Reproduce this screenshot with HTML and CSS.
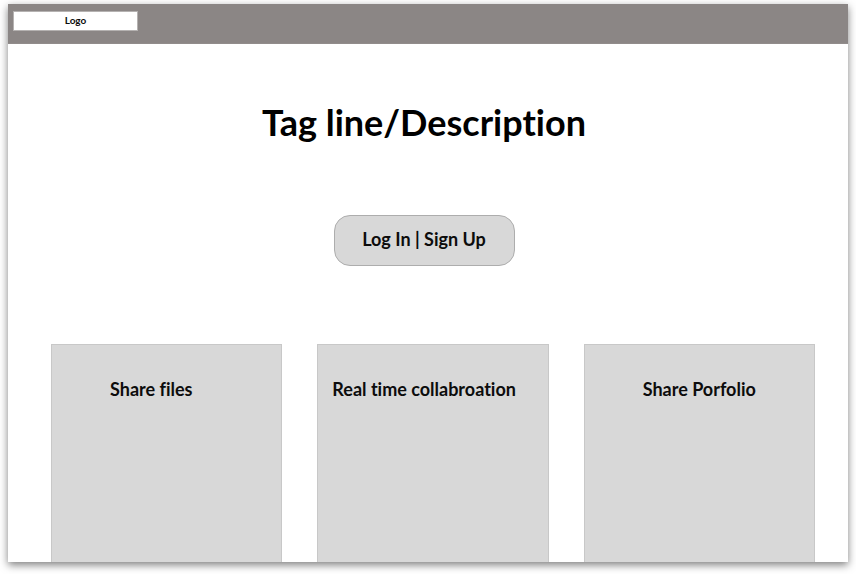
FILE: index.html
```html
<!DOCTYPE html>
<html lang="en">
<head>
<meta charset="utf-8">
<meta name="viewport" content="width=device-width, initial-scale=1">
<title>Home</title>
<link rel="stylesheet" href="styles.css">
</head>
<body>
<div class="page">
  <header class="topbar">
    <a class="logo" href="#">Logo</a>
  </header>
  <main class="content">
    <h1 class="tagline">Tag line/Description</h1>
    <button class="login" type="button">Log In | Sign Up</button>
    <div class="cards">
      <section class="card"><h2>Share files</h2></section>
      <section class="card card-wide-label"><h2>Real time collabroation</h2></section>
      <section class="card"><h2>Share Porfolio</h2></section>
    </div>
  </main>
</div>
</body>
</html>
```
FILE: styles.css
```css
* {
  box-sizing: border-box;
}

body {
  display: flex;
  min-height: 100vh;
  margin: 0;
  padding: 4px 8px 12px;
  background: #fff;
  color: #0c0c0c;
  font-family: Lato, "Liberation Sans", sans-serif;
  font-weight: 700;
  font-variant-ligatures: none;
}

.page {
  display: flex;
  flex: 1;
  flex-direction: column;
  background: #fff;
  box-shadow: 0 3px 8px rgba(0, 0, 0, 0.5);
}

.topbar {
  display: flex;
  height: 40px;
  padding: 7px 5px;
  background: #8b8685;
  border-bottom: 1px solid #918c8b;
}

.logo {
  width: 125px;
  height: 20px;
  border: 1px solid #b5b2b1;
  background: #fff;
  color: inherit;
  font-size: 10px;
  line-height: 17px;
  text-align: center;
  text-decoration: none;
}

.content {
  display: flex;
  flex: 1;
  flex-direction: column;
  align-items: center;
  padding: 52px 33px 0 43px;
}

.tagline {
  margin: 0;
  padding-right: 18px;
  color: #000;
  font-size: 36px;
  line-height: 52px;
}

.login {
  width: 181px;
  height: 51px;
  margin: 67px 18px 78px 0;
  padding: 0 0 4px;
  border: 1px solid #adadad;
  border-radius: 16px;
  background: #d8d8d8;
  color: inherit;
  font: inherit;
  font-size: 18px;
  font-variant-ligatures: none;
}

.cards {
  display: grid;
  flex: 1;
  grid-template-columns: repeat(3, 1fr);
  gap: 35px;
  align-self: stretch;
}

.card {
  padding: 32px 0 0 58px;
  border: 1px solid #c8c8c8;
  border-bottom: 0;
  background: #d8d8d8;
}

.card-wide-label {
  padding-left: 14px;
}

.card h2 {
  margin: 0;
  font-size: 18px;
  line-height: 24px;
  white-space: nowrap;
}
```
